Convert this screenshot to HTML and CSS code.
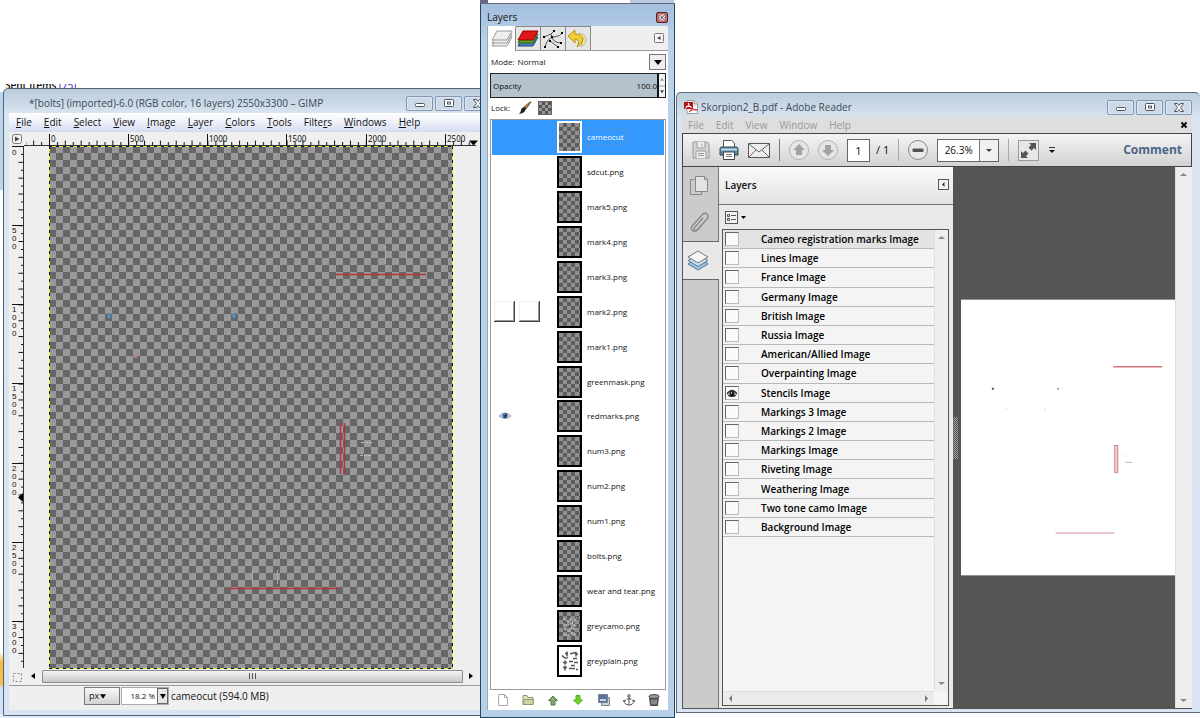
FILE: index.html
```html
<!DOCTYPE html>
<html lang="en">
<head>
<meta charset="utf-8">
<title>Layers - GIMP and Adobe Reader</title>
<link rel="stylesheet" href="styles.css">
</head>
<body>
<svg class="defs" aria-hidden="true">
  <defs>
    <symbol id="w-min" viewBox="0 0 27 15"><rect x="9.500" y="7.500" width="9" height="3" rx="1" fill="#fff" stroke="#4c535d"/></symbol>
    <symbol id="w-max" viewBox="0 0 27 15"><rect x="9.500" y="3.500" width="9" height="7" rx="1" fill="#fff" stroke="#4c535d"/><rect x="12.500" y="6" width="3" height="2" fill="#fff" stroke="#4c535d"/></symbol>
    <symbol id="w-close" viewBox="0 0 27 15"><path d="M9.500 3.500h3l1.500 2 1.500-2h3l-3 4 3 4h-3l-1.500-2-1.500 2h-3l3-4z" fill="#fff" stroke="#4c535d"/></symbol>
    <symbol id="eye" viewBox="0 0 16 12"><path d="M1 6Q8-1 15 6Q8 12 1 6z" fill="#e8eef5" stroke="#6b8099"/><circle cx="8" cy="5.500" r="3.200" fill="#35608f"/><circle cx="8" cy="5.500" r="1.500" fill="#0d1d35"/><circle cx="7" cy="4.300" r=".8" fill="#fff"/></symbol>
    <symbol id="sheets" viewBox="0 0 22 20"><path d="M6 8h15l-5 9H1z"/><path d="M6 5h15l-5 9H1z"/><path d="M6 2h15l-5 9H1z"/></symbol>
  </defs>
</svg>
<main class="desktop">
  <div class="back-mail">Sent Items <a href="#">(75)</a></div>
  <div class="back-top"><i></i><i></i></div>
  <div class="back-left"><b></b></div>
  <div class="back-bottom"></div>

  <section class="window gimp" aria-label="GIMP image window">
    <header class="titlebar">
      <h1>*[bolts] (imported)-6.0 (RGB color, 16 layers) 2550x3300 – GIMP</h1>
      <div class="controls">
        <button aria-label="Minimize"><svg><use href="#w-min"/></svg></button>
        <button aria-label="Maximize"><svg><use href="#w-max"/></svg></button>
        <button aria-label="Close"><svg><use href="#w-close"/></svg></button>
      </div>
    </header>
    <div class="gimp-body">
      <nav class="menubar gimp-menu">
        <a href="#"><u>F</u>ile</a><a href="#"><u>E</u>dit</a><a href="#"><u>S</u>elect</a><a href="#"><u>V</u>iew</a><a href="#"><u>I</u>mage</a><a href="#"><u>L</u>ayer</a><a href="#"><u>C</u>olors</a><a href="#"><u>T</u>ools</a><a href="#">Filte<u>r</u>s</a><a href="#"><u>W</u>indows</a><a href="#"><u>H</u>elp</a>
      </nav>
      <div class="work">
        <button class="corner" aria-label="Image menu"><svg viewBox="0 0 12 12"><rect x="1.500" y="1.500" width="9" height="9" rx="2" fill="#f4f4f4" stroke="#777"/><path d="M4 3.500v5L8.500 6z" fill="#444"/></svg></button>
        <svg class="ruler-h" width="456" height="14">
          <defs><pattern id="ticks-h" x="25" width="15.840" height="14" patternUnits="userSpaceOnUse"><path d="M.5 8.500v5M8.500 10v3" stroke="#111"/></pattern></defs>
          <rect x="2" width="448" height="14" fill="url(#ticks-h)"/>
          <path d="M0 13.500h452" stroke="#333"/>
          <path d="M25.500 2v12M104.500 2v12M183.500 2v12M262.500 2v12M342.500 2v12M421.500 2v12" stroke="#111"/>
          <path d="M445 8.500h9l-4.500 5z"/>
          <g><text x="27" y="10">0</text><text x="106" y="10">500</text><text x="185" y="10">1000</text><text x="264" y="10">1500</text><text x="344" y="10">2000</text><text x="423" y="10">2500</text></g>
        </svg>
        <svg class="ruler-v" width="15" height="522">
          <defs><pattern id="ticks-v" y="0" width="15" height="15.840" patternUnits="userSpaceOnUse"><path d="M9.500 .5h5M12 8.500h3" stroke="#111"/></pattern></defs>
          <rect width="15" height="522" fill="url(#ticks-v)"/>
          <path d="M14.500 0v522" stroke="#333"/>
          <path d="M3 .5h12M3 79.500h12M3 158.500h12M3 237.500h12M3 317.500h12M3 396.500h12M3 475.500h12" stroke="#111"/>
          <path d="M14 347v9l-5-4.500z"/>
          <g>
            <text x="3" y="9">0</text>
            <text><tspan x="3" y="87">5</tspan><tspan x="3" y="95">0</tspan><tspan x="3" y="103">0</tspan></text>
            <text><tspan x="3" y="166">1</tspan><tspan x="3" y="174">0</tspan><tspan x="3" y="182">0</tspan><tspan x="3" y="190">0</tspan></text>
            <text><tspan x="3" y="245">1</tspan><tspan x="3" y="253">5</tspan><tspan x="3" y="261">0</tspan><tspan x="3" y="269">0</tspan></text>
            <text><tspan x="3" y="325">2</tspan><tspan x="3" y="333">0</tspan><tspan x="3" y="341">0</tspan><tspan x="3" y="349">0</tspan></text>
            <text><tspan x="3" y="404">2</tspan><tspan x="3" y="412">5</tspan><tspan x="3" y="420">0</tspan><tspan x="3" y="428">0</tspan></text>
            <text><tspan x="3" y="483">3</tspan><tspan x="3" y="491">0</tspan><tspan x="3" y="499">0</tspan><tspan x="3" y="507">0</tspan></text>
          </g>
        </svg>
        <div class="viewport">
          <svg class="canvas" width="404" height="523">
            <defs><pattern id="check" x="0" y="0" width="14" height="14" patternUnits="userSpaceOnUse"><path fill="#999" d="M0 0h14v14H0z"/><path fill="#666" d="M0 0h7v7H0zM7 7h7v7H7z"/></pattern></defs>
            <rect width="404" height="523" fill="url(#check)"/>
            <g fill="none" shape-rendering="crispEdges"><path d="M.5 .5h403v522H.5z" stroke="#e6ea1c"/><path d="M0 .5h404M0 522.500h404M.5 0v523M403.500 0v523" stroke="#111" stroke-dasharray="3 4"/></g>
            <path d="M287 128.500h90M179 442.500h110" stroke="#b3373a" stroke-width="1.500"/>
            <path d="M291.500 277v51M295.500 277v51" stroke="#b3373a" stroke-width="1.500"/>
            <path d="M336.500 99v19M357.500 99v14M203.500 424v14M228.500 424v14" stroke="#aaa"/>
            <path d="M312 296.500h12M311 309.500h12" stroke="#bbb" stroke-dasharray="3 1"/>
            <g fill="#5b8fb5" stroke="#3f6d90" stroke-width=".6"><path d="M58 167l5 3-2 3-3-1zM182 169l5-2v4l-3 2z"/></g>
            <g fill="#b98686"><path d="M86 208h2v4h-4l2-2zM158 208h3l-1 3h-2z"/></g>
          </svg>
        </div>
        <button class="quickmask" aria-label="Quick mask"><svg viewBox="0 0 12 12"><rect x="2.500" y="2.500" width="8" height="8" fill="none" stroke="#888" stroke-dasharray="2 2"/></svg></button>
        <div class="hscroll"><button aria-label="Scroll left"><svg viewBox="0 0 8 12"><path d="M6 3v6L2 6z"/></svg></button><span class="thumb"><i></i></span><button aria-label="Scroll right"><svg viewBox="0 0 8 12"><path d="M2 3v6l4-3z"/></svg></button></div>
      </div>
      <footer class="status">
        <button class="unit">px<svg viewBox="0 0 8 6"><path d="M0 0h8L4 6z"/></svg></button>
        <div class="zoom"><input aria-label="Zoom" value="18.2 %"><button aria-label="Zoom levels"><svg viewBox="0 0 8 6"><path d="M1 0h7L4.500 6z"/></svg></button></div>
        <span>cameocut (594.0 MB)</span>
      </footer>
    </div>
  </section>

  <section class="window reader" aria-label="Adobe Reader">
    <header class="titlebar">
      <svg class="pdf" viewBox="0 0 14 14"><path d="M3 .5h7l3.500 3.500v9.500H3z" fill="#fff" stroke="#999"/><path d="M10 .5V4h3.500" fill="#ddd" stroke="#999"/><path d="M0 2h9v7H0z" fill="#b51218"/><path d="M1 8.500C4 7 5 4 4.500 3c0 3 2 5 4 4.500M2 6.500h6" fill="none" stroke="#fff"/><path d="M5 12c3-2 3-5 3-6 0 3 2 4 5 4-3-1-6 0-8 2z" fill="none" stroke="#c22"/></svg>
      <h1>Skorpion2_B.pdf - Adobe Reader</h1>
      <div class="controls">
        <button aria-label="Minimize"><svg><use href="#w-min"/></svg></button>
        <button aria-label="Maximize"><svg><use href="#w-max"/></svg></button>
        <button aria-label="Close"><svg><use href="#w-close"/></svg></button>
      </div>
    </header>
    <nav class="menubar reader-menu">
      <a href="#">File</a><a href="#">Edit</a><a href="#">View</a><a href="#">Window</a><a href="#">Help</a>
      <button aria-label="Close document"><svg viewBox="0 0 8 8"><path d="M1.500 1.500l5 5M6.500 1.500l-5 5" stroke="#000" stroke-width="2"/></svg></button>
    </nav>
    <div class="toolbar">
      <button aria-label="Save"><svg width="18" height="18" viewBox="0 0 18 18"><path d="M1 1h14l2 2v14H1z" fill="#d6d6d6" stroke="#999"/><path d="M5 1v6h8V1M4 17v-7h10v7" fill="#eee" stroke="#999"/><path d="M10 2.500v3M6 12.500h6M6 14.500h6" stroke="#999"/></svg></button>
      <button aria-label="Print"><svg width="20" height="20" viewBox="0 0 20 20"><path d="M4.500 8V.5h8L15.500 3v5" fill="#fff" stroke="#555"/><path d="M1 9q0-2 2-2h14q2 0 2 2v6H1z" fill="#5f88ad" stroke="#344"/><path d="M2 9.500h16" stroke="#bcd6eb" stroke-width="2"/><path d="M4.500 12h11v7.500h-11z" fill="#fff" stroke="#444"/><path d="M7 14.500h6M7 16.500h6" stroke="#777"/></svg></button>
      <button aria-label="Email"><svg width="22" height="15" viewBox="0 0 22 15"><path d="M.5.5h21v14H.5z" fill="#eee" stroke="#555"/><path d="M1 1l10 8L21 1M1 14l7-7M21 14l-7-7" fill="none" stroke="#666"/></svg></button>
      <i class="sep"></i>
      <button aria-label="Previous page"><svg width="20" height="20" viewBox="0 0 20 20"><circle cx="10" cy="10" r="9.500" fill="#e6e6e6" stroke="#b0b0b0"/><path d="M10 4l6 6h-3v5H7v-5H4z" fill="#a2a2a2"/></svg></button>
      <button aria-label="Next page"><svg width="20" height="20" viewBox="0 0 20 20"><circle cx="10" cy="10" r="9.500" fill="#e6e6e6" stroke="#b0b0b0"/><path d="M10 16l6-6h-3V5H7v5H4z" fill="#a2a2a2"/></svg></button>
      <label class="page"><input aria-label="Page" value="1"><span>/ 1</span></label>
      <i class="sep light"></i>
      <button aria-label="Zoom out"><svg width="20" height="20" viewBox="0 0 20 20"><circle cx="10" cy="10" r="9.500" fill="#e9e9e9" stroke="#888"/><rect x="4.500" y="8.500" width="11" height="3.500" rx="1" fill="#555"/></svg></button>
      <div class="zoom-box"><input aria-label="Zoom level" value="26.3%"><button aria-label="Zoom levels"><svg viewBox="0 0 8 5"><path d="M1 1h6L4 4z" fill="#444"/></svg></button></div>
      <i class="sep light"></i>
      <button aria-label="Read mode"><svg width="21" height="21" viewBox="0 0 21 21"><rect x=".5" y=".5" width="20" height="20" fill="#e7e7e7" stroke="#999"/><path d="M11 3h7v7l-2-2-2.500 2.500-3-3L13 5zM3 18v-7l2 2 2.500-2.500 3 3L8 16l2 2z" fill="#555"/></svg></button>
      <button aria-label="More tools"><svg width="8" height="8" viewBox="0 0 8 8"><path d="M1 1.500h6" stroke="#333"/><path d="M1 4h6L4 7z" fill="#111"/></svg></button>
      <button class="comment">Comment</button>
    </div>
    <div class="reader-body">
      <nav class="rail">
        <button aria-label="Pages"><svg width="20" height="21" viewBox="0 0 20 21"><path d="M6.500 4.500h-5v15h11v-3" fill="none" stroke="#888"/><path d="M6.500 1.500h9l3 3v12h-12z" fill="#e2e2e2" stroke="#888"/><path d="M15.500 1.500v3h3" fill="none" stroke="#888"/></svg></button>
        <button aria-label="Attachments"><svg width="20" height="21" viewBox="0 0 20 21"><path d="M14 6l-8 9q-2 2-.5 3t3-.5l9-10q3-3.500.5-5.500t-5 1l-9 10q-3 3.500-.5 5.500t5.500-1l6-7" fill="none" stroke="#888" stroke-width="1.300"/></svg></button>
        <button class="active" aria-label="Layers"><svg width="22" height="21" viewBox="0 0 22 21"><path d="M1 14l10-6 10 6-10 6z" fill="#9fc2df" stroke="#58768f"/><path d="M1 10.500l10-6 10 6-10 6z" fill="#c8dff0" stroke="#58768f"/><path d="M1 7l10-6 10 6-10 6z" fill="#f5f5f5" stroke="#777"/></svg></button>
      </nav>
      <aside class="side">
        <header><h2>Layers</h2><button aria-label="Collapse panel"><svg viewBox="0 0 11 11"><rect x=".5" y=".5" width="10" height="10" fill="#f2f2f2" stroke="#555"/><path d="M6.500 3v5L4 5.500z" fill="#333"/></svg></button></header>
        <div class="options"><button aria-label="Options"><svg width="21" height="13" viewBox="0 0 21 13"><rect x=".5" y=".5" width="12" height="12" fill="#f2f2f2" stroke="#555"/><path d="M2.500 3.500h2v2h-2zM2.500 7.500h2v2h-2z" fill="none" stroke="#555"/><path d="M6 4.500h5M6 8.500h5" stroke="#555"/><path d="M16 5h5l-2.500 3z"/></svg></button></div>
        <div class="tree">
          <ul>
            <li class="hot"><label><input type="checkbox">Cameo registration marks Image</label></li>
            <li><label><input type="checkbox">Lines Image</label></li>
            <li><label><input type="checkbox">France Image</label></li>
            <li><label><input type="checkbox">Germany Image</label></li>
            <li><label><input type="checkbox">British Image</label></li>
            <li><label><input type="checkbox">Russia Image</label></li>
            <li><label><input type="checkbox">American/Allied Image</label></li>
            <li><label><input type="checkbox">Overpainting Image</label></li>
            <li><label><input type="checkbox" checked><svg class="on" viewBox="0 0 12 8"><path d="M1 5Q6-2 11 5M2 6Q6 9 10 6" fill="none" stroke="#333" stroke-width="1.300"/><circle cx="6" cy="4.500" r="2.600" fill="#111"/><circle cx="5.500" cy="4" r=".8" fill="#fff"/></svg>Stencils Image</label></li>
            <li><label><input type="checkbox">Markings 3 Image</label></li>
            <li><label><input type="checkbox">Markings 2 Image</label></li>
            <li><label><input type="checkbox">Markings Image</label></li>
            <li><label><input type="checkbox">Riveting Image</label></li>
            <li><label><input type="checkbox">Weathering Image</label></li>
            <li><label><input type="checkbox">Two tone camo Image</label></li>
            <li><label><input type="checkbox">Background Image</label></li>
          </ul>
          <div class="vbar"><svg viewBox="0 0 8 5"><path d="M0 4h7L3.500 1z"/></svg><svg viewBox="0 0 8 5"><path d="M0 1h7L3.500 4z"/></svg></div>
          <div class="hbar"><svg viewBox="0 0 5 8"><path d="M4 0v7L1 3.500z"/></svg><svg viewBox="0 0 5 8"><path d="M1 0v7l3-3.500z"/></svg></div>
        </div>
      </aside>
      <div class="document">
        <i class="grip"></i>
        <svg class="sheet" width="215" height="277" viewBox="0 0 215 277">
          <rect width="215" height="277" fill="#fff"/>
          <path d="M153 67.500h49" stroke="#cf7476" stroke-width="1.500"/>
          <path d="M95 234.500h59" stroke="#cf9294"/>
          <rect x="154.500" y="146.500" width="3" height="27" fill="#f3d6d6" stroke="#cb7d7f"/>
          <path d="M165 163.500h7M165 157h1M45 110h1M84 110h1" stroke="#bbb"/>
          <path d="M31 89.500h2M97 89.500h1" stroke="#335a6d" stroke-width="2"/>
        </svg>
      </div>
      <div class="vbar page-bar"><svg viewBox="0 0 8 5"><path d="M0 4h7L3.500 1z"/></svg><svg viewBox="0 0 8 5"><path d="M0 1h7L3.500 4z"/></svg></div>
    </div>
  </section>

  <section class="window dock" aria-label="Layers dock">
    <header class="titlebar"><h1>Layers</h1><button class="close" aria-label="Close"><svg viewBox="0 0 12 11"><path d="M3.500 3l5 5M8.500 3l-5 5" stroke="#fff" stroke-width="2.500"/><path d="M3.500 3l5 5M8.500 3l-5 5" stroke="#333"/></svg></button></header>
    <div class="dock-body">
      <div class="tabs">
        <button class="active" aria-label="Layers"><svg width="22" height="20"><use href="#sheets" fill="#eee" stroke="#999"/></svg></button>
        <button aria-label="Channels"><svg width="22" height="20" viewBox="0 0 22 20"><path d="M6 8h15l-5 9H1z" fill="#4a78b8" stroke="#27477a"/><path d="M6 5h15l-5 9H1z" fill="#55a52b" stroke="#2e6a14"/><path d="M6 2h15l-5 9H1z" fill="#dd171a" stroke="#900"/></svg></button>
        <button aria-label="Paths"><svg width="22" height="20" viewBox="0 0 22 20"><path d="M2 8l7-3 3-3M3 18Q5 9 12 8t8-4M9 5q1 9 10 9M8 12l8 6" fill="none" stroke="#555"/><path d="M1 7h2v2H1zM11 1h2v2h-2zM19 3h2v2h-2zM2 17h2v2H2zM18 13h2v2h-2zM9 7h2v2H9zM7 11h2v2H7zM15 17h2v2h-2z"/></svg></button>
        <button aria-label="Undo history"><svg width="22" height="20" viewBox="0 0 22 20"><path d="M12 4q8 2 7 8-1 4-5 6 3-7-3-8z" fill="#eee3a8" stroke="#c9bd83"/><path d="M1 7l7-6v4q7 0 8 5 0 5-6 8 4-7-2-8v4z" fill="#f2cf37" stroke="#b8921a"/></svg></button>
        <button class="tab-menu" aria-label="Tab menu"><svg viewBox="0 0 10 10"><rect x=".5" y=".5" width="9" height="9" rx="1" fill="#f5f5f5" stroke="#777"/><path d="M6.500 3v4L3 5z" fill="#444"/></svg></button>
      </div>
      <div class="mode"><label for="mode">Mode: </label><select id="mode"><option>Normal</option></select><span class="drop"><svg viewBox="0 0 8 5"><path d="M0 0h8L4 5z"/></svg></span></div>
      <div class="opacity"><label for="opacity">Opacity</label><input id="opacity" value="100.0"><span class="spin"><svg viewBox="0 0 6 24"><path d="M1 7h4L3 4z" fill="#99a"/><path d="M0 12.500h6" stroke="#999"/><path d="M1 17h4l-2 3z" fill="#347"/></svg></span></div>
      <div class="lock"><span>Lock:</span><button aria-label="Lock pixels"><svg width="14" height="14" viewBox="0 0 14 14"><path d="M13 1l-5 7-2-2 6-5z" fill="#b98746" stroke="#705332"/><path d="M8 7q0 5-7 6 2-2 2-4 1-4 5-2z" fill="#222"/></svg></button><button class="alpha" aria-label="Lock alpha channel"></button></div>
      <div class="list">
        <ul>
          <li class="selected"><i class="thumbnail"></i><span>cameocut</span></li>
          <li><i class="thumbnail"></i><span>sdcut.png</span></li>
          <li><i class="thumbnail"></i><span>mark5.png</span></li>
          <li><i class="thumbnail"></i><span>mark4.png</span></li>
          <li><i class="thumbnail"></i><span>mark3.png</span></li>
          <li><button class="raised" aria-label="Show mark2.png"></button><button class="raised" aria-label="Link mark2.png"></button><i class="thumbnail"></i><span>mark2.png</span></li>
          <li><i class="thumbnail"></i><span>mark1.png</span></li>
          <li><i class="thumbnail"></i><span>greenmask.png</span></li>
          <li><button class="seen" aria-label="Hide redmarks.png"><svg width="14" height="10"><use href="#eye"/></svg></button><i class="thumbnail"></i><span>redmarks.png</span></li>
          <li><i class="thumbnail"></i><span>num3.png</span></li>
          <li><i class="thumbnail"></i><span>num2.png</span></li>
          <li><i class="thumbnail"></i><span>num1.png</span></li>
          <li><i class="thumbnail"></i><span>bolts.png</span></li>
          <li><i class="thumbnail"></i><span>wear and tear.png</span></li>
          <li><i class="thumbnail"><svg viewBox="0 0 21 27"><path d="M4 6l5 3 3-3 2 4 4-5M4 11l3 2 6-2 5 3M5 16l5 3 3-4 4 3M4 22l5 1 4-3 5 3" fill="none" stroke="#bbb" stroke-width="1.500" stroke-dasharray="3 1"/></svg></i><span>greycamo.png</span></li>
          <li><i class="thumbnail plain"><svg viewBox="0 0 21 27"><path d="M8 4v5M6 6h3M11 6h3M14 5l5 2M17 4v5M3 8q3 4 6 2M14 11h4M4 15h4M6 13v4M10 14h4M15 15h4M4 20h4M6 18v5M10 21h6M12 18h4M17 22h2" fill="none" stroke="#555" stroke-width="1.500"/></svg></i><span>greyplain.png</span></li>
        </ul>
      </div>
      <footer class="actions">
        <button aria-label="New layer"><svg viewBox="0 0 12 12"><path d="M1.500.5h6l3 3v8h-9z" fill="#fff" stroke="#aaa"/><path d="M7.500.5v3h3" fill="none" stroke="#aaa"/></svg></button>
        <button aria-label="New group"><svg viewBox="0 0 12 12"><path d="M1 10.500v-9h4l1 2h5v7z" fill="#dde5c9" stroke="#8b9a6b"/><path d="M1 10.500l1-5h9.500l-.5 5z" fill="#c9d8a5" stroke="#8b9a6b"/></svg></button>
        <button aria-label="Raise layer"><svg viewBox="0 0 12 12"><path d="M6 2l4.500 4.500H8V11H4V6.500H1.500z" fill="#86a973" stroke="#527a42"/></svg></button>
        <button aria-label="Lower layer"><svg viewBox="0 0 12 12"><path d="M6 10.500l4.500-4.500H8V1.500H4V6H1.500z" fill="#73d12c" stroke="#4fae1c"/></svg></button>
        <button aria-label="Duplicate layer"><svg viewBox="0 0 12 12"><path d="M3.500 3.500h8v8h-8z" fill="#cbd3de" stroke="#7a8695"/><path d="M.5.500h9v8h-9z" fill="#5a7396" stroke="#7a8695"/><path d="M2 5h6v2H2z" fill="#c5d3e4"/></svg></button>
        <button aria-label="Anchor layer"><svg viewBox="0 0 12 12"><path d="M6 3v8M3.500 5h5M1 6.500Q1.500 11 6 11t5-4.500M0 8l1-2 2 1M12 8l-1-2-2 1" fill="none" stroke="#555"/><circle cx="6" cy="2" r="1.300" fill="none" stroke="#555"/></svg></button>
        <button aria-label="Delete layer"><svg viewBox="0 0 12 12"><path d="M1.500 3l1 8.500h7l1-8.500z" fill="#666" stroke="#444"/><ellipse cx="6" cy="2.500" rx="5" ry="2" fill="#999" stroke="#444"/><path d="M4 6v4M6 6v4M8 6v4" stroke="#aaa"/></svg></button>
      </footer>
    </div>
  </section>
</main>
</body>
</html>
```
FILE: styles.css
```css
* { box-sizing: border-box; }
body { margin: 0; background: #fff; font: 10px/14px "Open Sans", "Noto Sans", sans-serif; color: #111; }
button, input, select { font: inherit; color: inherit; margin: 0; padding: 0; border: 0; background: none; border-radius: 0; min-width: 0; }
button { display: flex; align-items: center; justify-content: center; }
ul { list-style: none; margin: 0; padding: 0; }
h1, h2 { margin: 0; font: inherit; }
a { color: inherit; text-decoration: none; }
svg { display: block; }
.defs { position: absolute; width: 0; height: 0; }

/* desktop */
.desktop { position: relative; min-height: 100vh; overflow: hidden; }
.window { position: absolute; display: flex; flex-direction: column; }
.back-mail { position: absolute; left: 5px; top: 84px; height: 4px; line-height: 2px; overflow: hidden; font-weight: 600; }
.back-mail a { color: #22c; font-weight: 400; }
.back-top { position: absolute; left: 480px; top: 0; width: 194px; height: 4px; display: flex; justify-content: space-between; background: #fff; }
.back-top i { width: 8px; background: #668; }
.back-top i + i { width: 44px; background: #b9c8e3; }
.back-left { position: absolute; left: 0; top: 92px; width: 4px; bottom: 0; background: linear-gradient(#bcd5ec 98px, #fff 98px, #fff 560px, #f8b83e 570px, #f8c050 592px, #cfe0f6 596px); }
.back-bottom { position: absolute; left: 0; right: 0; bottom: 0; height: 4px; background: linear-gradient(90deg, #e3edf9 240px, #fff 240px); }

.titlebar { display: flex; align-items: center; color: #3b4856; white-space: nowrap; }
.controls { display: flex; gap: 2px; margin-left: auto; }
.controls button { width: 27px; height: 15px; border: 1px solid #8497b2; border-radius: 2px; background: #ccd9e7; box-shadow: inset 0 0 0 1px #dde7f1; }
.controls svg { width: 27px; height: 15px; flex: none; }
.menubar { display: flex; align-items: center; }

/* image window */
.gimp { left: 3px; top: 88px; width: 493px; bottom: 2px; padding: 0 6px 0 5px; border: 1px solid #55626f; border-radius: 5px 5px 0 0; background: linear-gradient(#b9cbdb, #dbe6f1 26px, #d8e4f2); }
.gimp .titlebar { height: 25px; padding: 4px 0 0 20px; }
.gimp .controls { margin-right: -2px; }
.gimp-body { flex: 1; display: flex; flex-direction: column; margin-bottom: 5px; background: #efefef; }
.gimp-menu { height: 19px; padding: 0 0 1px 7px; gap: 12px; background: linear-gradient(#fff, #f1f3fb 8px, #d5dcf0); }
.work { flex: 1; display: grid; grid-template: 14px 1fr 16px / 15px 1fr; min-height: 0; }
.work text { font: 8px "Liberation Sans", sans-serif; fill: #111; }
.ruler-h text { font-family: "Noto Sans", sans-serif; }
.corner svg, .quickmask svg { width: 12px; height: 12px; }
.ruler-h, .ruler-v { overflow: hidden; }
.viewport { padding-left: 25px; overflow: hidden; }
.hscroll { display: flex; align-items: center; width: 453px; height: 14px; padding: 0 0 0 3px; }
.hscroll svg { width: 8px; height: 12px; }
.hscroll button { width: 12px; }
.thumb { flex: 1; height: 13px; margin: 0 2px 0 3px; display: grid; place-items: center; border: 1px solid #8b8b8b; border-radius: 1px; background: linear-gradient(#f4f4f4, #dedede 50%, #c9c9c9); }
.thumb i { width: 7px; height: 6px; background: repeating-linear-gradient(90deg, #555 0 1px, transparent 1px 3px); }
.status { display: flex; align-items: center; height: 25px; padding: 0 0 4px 75px; border-top: 1px solid #999; }
.unit { width: 36px; height: 18px; gap: 1px; border: 1px solid #777; background: linear-gradient(#f8f8f8, #d2d2d2); justify-content: flex-start; padding-left: 4px; font-size: 9px; }
.unit svg { width: 6px; height: 5px; }
.zoom { display: flex; width: 48px; height: 18px; margin: 0 2px 0 1px; border: 1px solid #aaa; background: #fff; }
.zoom input { flex: 1; width: 30px; text-align: right; font-size: 8px; padding-right: 2px; }
.zoom button { width: 11px; border: 1px solid #666; background: #e4e4e4; }
.zoom svg { width: 7px; height: 5px; }

/* layers dock */
.dock { left: 480px; top: 3px; width: 195px; bottom: 0; padding: 0 6px 7px 6px; border: 1px solid #23475e; border-top-color: #667; background: linear-gradient(#a3bfdd, #bcd2ea 40px, #b8cfe9); font-size: 8px; }
.dock .titlebar { height: 22px; justify-content: space-between; padding: 4px 0 0 0; color: #111; font-size: 10px; }
.close { width: 12px; height: 11px; border: 1px solid #5d2429; border-radius: 2px; background: #bd656c; }
.close svg { width: 12px; height: 11px; flex: none; }
.dock-body { flex: 1; display: flex; flex-direction: column; background: #fff; border-left: 1px solid #9aa; min-height: 0; }
.tabs { display: flex; height: 25px; background: #efefef; border-bottom: 1px solid #999; }
.tabs button { width: 25px; border: solid #888; border-width: 1px 1px 0 0; background: #e6e6e6; }
.tabs .active { width: 28px; height: 25px; background: #fff; border-color: #fff; border-right-color: #888; }
.tabs .tab-menu { width: 10px; margin: 0 4px 0 auto; background: none; border: 0; }
.tab-menu svg { width: 10px; height: 10px; }
.mode { display: flex; align-items: center; height: 22px; padding-left: 3px; }
.mode label { margin-right: 3px; }
.mode select { flex: 1; appearance: none; }
.drop { width: 17px; height: 16px; display: grid; place-items: center; margin-right: 2px; border: 1px solid #777; background: #eee; }
.drop svg { width: 8px; height: 5px; }
.opacity { display: flex; align-items: center; height: 25px; margin: 0 2px 0 2px; padding-left: 2px; border: 1px solid #222; background: #b4c2ce; }
.opacity input { flex: 1; text-align: right; height: 23px; }
.spin { width: 8px; height: 23px; border-left: 2px solid #111; background: #f3f3f3; }
.spin svg { width: 6px; height: 23px; }
.lock { display: flex; align-items: center; gap: 8px; height: 21px; padding: 0 0 2px 3px; }
.alpha { width: 14px; height: 14px; margin-left: -2px; background: repeating-conic-gradient(#555 0 25%, #999 0 50%) 0 0 / 6px 6px; border: 1px solid #666; }
.list { flex: 1; margin: 0 2px; padding: 0 1px; border: 1px solid #999; min-height: 0; }
.list ul { display: grid; grid-auto-rows: 1fr; height: 558px; }
.list li { display: grid; grid-template-columns: 24px 24px 40px 1fr; column-gap: 1px; align-items: center; padding-left: 2px; }
.list li > span { grid-column: 4; grid-row: 1; padding-left: 2px; white-space: nowrap; justify-self: start; }
.list .selected { background: #3399ff; color: #fff; }
.selected span { outline: 1px dotted #6b8fb5; }
.thumbnail { grid-column: 3; grid-row: 1; margin-left: 13px; width: 25px; height: 32px; border: 2px solid #000; background: repeating-conic-gradient(#5d5d5d 0 25%, #909090 0 50%) 0 0 / 8px 8px; }
.selected .thumbnail { border-color: #fff; }
.thumbnail.plain { background: #fff; }
.thumbnail svg { width: 21px; height: 28px; }
.raised { width: 21px; height: 21px; border: solid #444; border-width: 0 1px 1px 0; box-shadow: inset 1px 1px #eee, inset -1px -1px #999; }
.seen { width: 21px; }
.actions { display: flex; justify-content: space-between; align-items: center; height: 20px; padding: 0 8px 0 9px; }
.actions svg { width: 12px; height: 12px; }

/* document reader */
.reader { left: 676px; right: 0; top: 92px; bottom: 5px; padding: 0 8px 3px 5px; border: 1px solid #5c6c7b; border-right: 0; border-radius: 5px 5px 0 0; background: linear-gradient(#bccddd, #d9e5f0 26px, #d8e4f1); }
.reader .titlebar { height: 23px; padding: 5px 0 0 2px; }
.pdf { width: 14px; height: 14px; margin-right: 3px; }
.reader-menu { height: 17px; padding: 0 4px 0 6px; gap: 12px; background: #dedede; color: #999; }
.reader-menu button { margin-left: auto; width: 8px; }
.reader-menu svg { width: 8px; height: 8px; }
.toolbar { display: flex; align-items: center; height: 34px; padding: 0 9px; gap: 9px; border: 1px solid #444; background: linear-gradient(#f4f4f4, #d2d2d2); font-size: 11px; }
.sep { width: 1px; height: 22px; background: #777; }
.sep.light { background: #aaa; }
.page { display: flex; align-items: center; gap: 6px; }
.page input { width: 23px; height: 23px; border: 1px solid #666; background: #fff; text-align: center; }
.zoom-box { display: flex; width: 62px; height: 23px; border: 1px solid #666; background: #fff; font-size: 10px; }
.zoom-box input { width: 42px; text-align: center; border-right: 1px solid #777; }
.zoom-box button { flex: 1; background: #f1f1f1; }
.zoom-box svg { width: 8px; height: 5px; }
.comment { margin-left: auto; font-size: 12px; font-weight: 700; color: #4a6688; }
.reader-body { flex: 1; display: grid; grid-template-columns: 36px 234px 1fr 17px; min-height: 0; border: solid #555; border-width: 0 0 1px 1px; }
.rail { background: #cbcbcb; border-right: 1px solid #777; }
.rail button { width: 32px; height: 37px; }
.rail .active { width: 36px; height: 39px; padding-right: 6px; border: solid #666; border-width: 1px 0; background: #e8e8e8; }
.side { display: flex; flex-direction: column; background: #e9e9e9; padding: 0 4px 2px 3px; min-height: 0; }
.side header { display: flex; align-items: center; justify-content: space-between; height: 38px; margin: 0 -4px 0 -3px; padding: 0 4px 2px 6px; border-bottom: 1px solid #777; background: linear-gradient(#fbfbfb, #e2e2e2); }
.side h2 { font-weight: 600; }
.side header svg { width: 11px; height: 11px; }
.options { display: flex; align-items: center; height: 24px; padding-left: 3px; }
.tree { flex: 1; display: grid; grid-template: 1fr 14px / 1fr 14px; border: 1px solid #555; background: #f4f4f4; min-height: 0; }
.tree ul { display: grid; grid-auto-rows: 1fr; height: 307px; }
.tree li { border-bottom: 1px solid #b9b9b9; }
.tree .hot { background: #e3e3e3; }
.tree label { display: flex; align-items: center; height: 100%; padding-left: 2px; gap: 22px; font-weight: 600; color: #000; position: relative; }
.tree input { appearance: none; width: 14px; height: 14px; border: 1px solid #666; border-right-color: #bbb; border-bottom-color: #bbb; background: #fafafa; }
.on { position: absolute; left: 3px; width: 12px; height: 8px; }
.vbar { display: flex; flex-direction: column; justify-content: space-between; align-items: center; padding: 5px 0; background: #eee; border-left: 1px solid #e0e0e0; }
.vbar svg { width: 8px; height: 5px; fill: #888; }
.hbar { display: flex; justify-content: space-between; align-items: center; padding: 0 5px; background: #ebebeb; border-top: 1px solid #ddd; }
.hbar svg { width: 5px; height: 8px; fill: #777; }
.document { display: flex; align-items: center; gap: 3px; background: #555; min-width: 0; }
.grip { width: 5px; height: 42px; background: repeating-conic-gradient(#999 0 25%, #555 0 50%) 0 0 / 2px 2px; }
.page-bar { background: #efeeee; }
```
